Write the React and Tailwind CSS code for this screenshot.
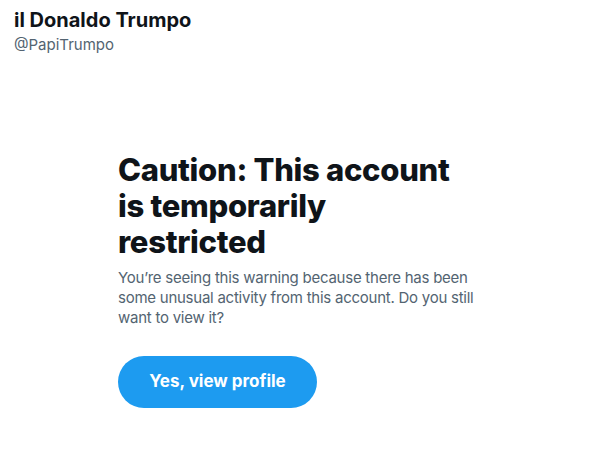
export default function App() {
  return (
    <div className="w-[591px] h-[450px] bg-white overflow-hidden" style={{ fontFamily: 'Inter, "Noto Sans", sans-serif' }}>
      <div className="px-[14px] pt-[8px]">
        <div className="text-[20px] leading-[24px] font-bold text-[#0f1419]">il Donaldo Trumpo</div>
        <div className="text-[15px] leading-[20px] text-[#536471] mt-[3px]">@PapiTrumpo</div>
      </div>
      <div className="ml-[118px] w-[362px] mt-[97px]">
        <h1 className="text-[31px] leading-[36px] font-extrabold text-[#0f1419] tracking-[-0.3px] pr-[10px]">
          Caution: This account is temporarily restricted
        </h1>
        <p className="mt-[8px] text-[15px] leading-[20px] text-[#536471] tracking-[-0.25px]">
          You’re seeing this warning because there has been some unusual activity from this account. Do you still want to view it?
        </p>
        <button className="mt-[28px] h-[52px] w-[199px] rounded-full bg-[#1d9bf0] text-white text-[17px] font-bold">
          Yes, view profile
        </button>
      </div>
    </div>
  );
}
